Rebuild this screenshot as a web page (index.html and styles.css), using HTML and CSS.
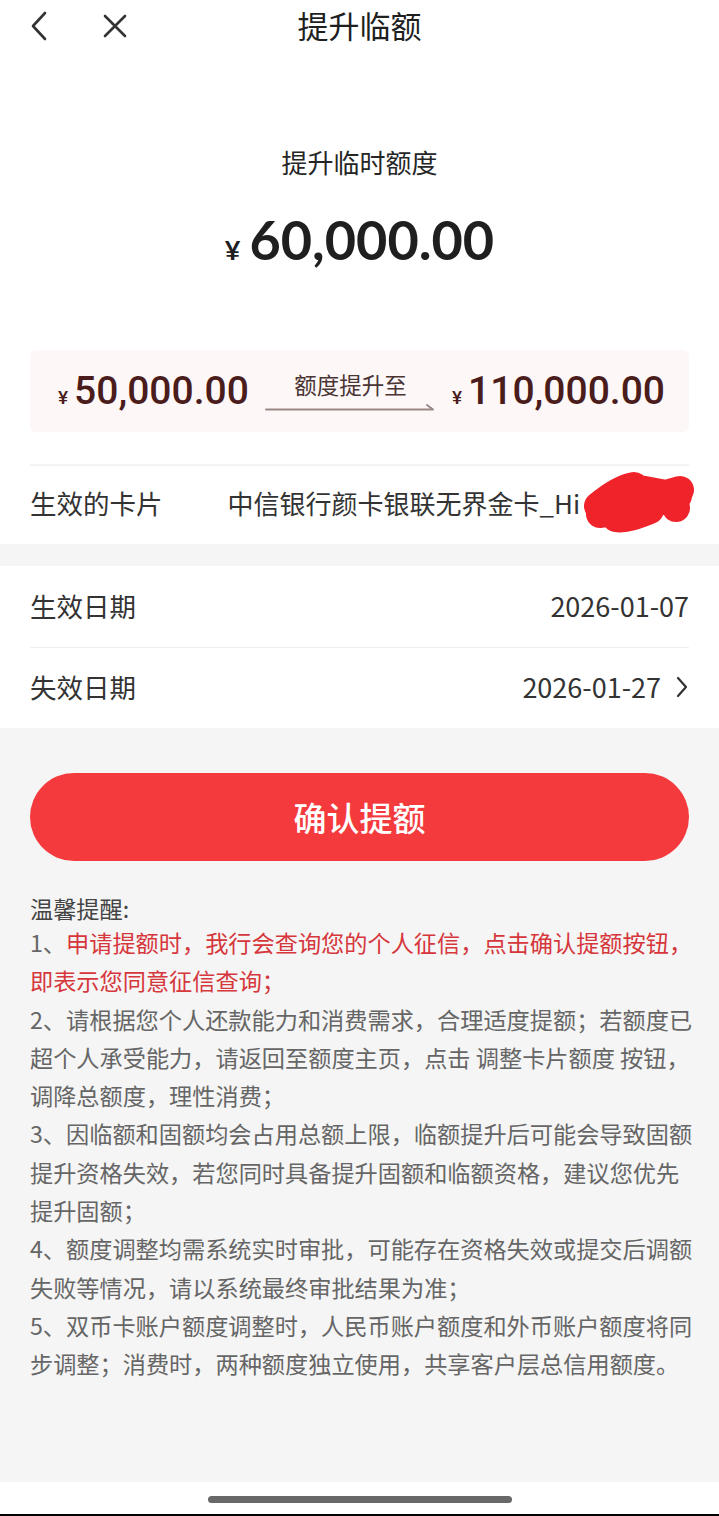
FILE: index.html
```html
<!DOCTYPE html>
<html lang="zh-CN">
<head>
<meta charset="UTF-8">
<meta name="viewport" content="width=device-width, initial-scale=1.0">
<title>提升临额</title>
<link rel="stylesheet" href="styles.css">
</head>
<body>
<div class="top">
  <div class="header">
    <div class="header-icons">
      <svg class="icon-back" width="22" height="32" viewBox="0 0 22 32"><path d="M17 3 L5 16 L17 29" fill="none" stroke="#333" stroke-width="2.6" stroke-linecap="round" stroke-linejoin="round"/></svg>
      <svg class="icon-close" width="26" height="26" viewBox="0 0 26 26"><path d="M3 3 L23 23 M23 3 L3 23" fill="none" stroke="#333" stroke-width="2.6" stroke-linecap="round"/></svg>
    </div>
    <div class="header-title">提升临额</div>
    <div></div>
  </div>

  <div class="hero">
    <div class="hero-label">提升临时额度</div>
    <div class="hero-amount"><span class="yen">¥</span>60,000.00</div>
  </div>

  <div class="compare">
    <div class="compare-amount"><span class="yen">¥</span>50,000.00</div>
    <div class="compare-mid">
      <span>额度提升至</span>
      <svg width="170" height="8" viewBox="0 0 170 8"><path d="M1 6.5 H168 L162 2" fill="none" stroke="#9b8787" stroke-width="2" stroke-linecap="round" stroke-linejoin="round"/></svg>
    </div>
    <div class="compare-amount"><span class="yen">¥</span>110,000.00</div>
  </div>

  <div class="card-row">
    <span class="row-label">生效的卡片</span>
    <span class="card-name">中信银行颜卡银联无界金卡_Hi</span>
    <svg class="scribble" width="130" height="70" viewBox="0 0 130 70"><path d="M28 38 C40 28 52 20 64 18 M30 46 C60 40 90 34 108 28 M64 20 L96 26 L110 22 M46 50 C56 52 70 46 80 42 M104 28 L106 40" fill="none" stroke="#f0232b" stroke-width="28" stroke-linecap="round" stroke-linejoin="round"/></svg>
  </div>
</div>

<div class="dates">
  <div class="date-row">
    <span class="row-label">生效日期</span>
    <span class="date-value">2026-01-07</span>
  </div>
  <div class="date-row">
    <span class="row-label">失效日期</span>
    <span class="date-value">2026-01-27
      <svg width="14" height="24" viewBox="0 0 14 24"><path d="M3 3 L11 12 L3 21" fill="none" stroke="#333" stroke-width="2.2" stroke-linecap="round" stroke-linejoin="round"/></svg>
    </span>
  </div>
</div>

<div class="bottom">
  <button class="confirm-btn">确认提额</button>

  <div class="notes">
    <div class="notes-title">温馨提醒:</div>
    <p><span>1、</span><span class="warn">申请提额时，我行会查询您的个人征信，点击确认提额按钮，即表示您同意征信查询；</span></p>
    <p>2、请根据您个人还款能力和消费需求，合理适度提额；若额度已超个人承受能力，请返回至额度主页，点击 调整卡片额度 按钮，调降总额度，理性消费；</p>
    <p>3、因临额和固额均会占用总额上限，临额提升后可能会导致固额提升资格失效，若您同时具备提升固额和临额资格，建议您优先提升固额；</p>
    <p>4、额度调整均需系统实时审批，可能存在资格失效或提交后调额失败等情况，请以系统最终审批结果为准；</p>
    <p>5、双币卡账户额度调整时，人民币账户额度和外币账户额度将同步调整；消费时，两种额度独立使用，共享客户层总信用额度。</p>
  </div>
</div>

<div class="home-bar"><div class="home-indicator"></div></div>
</body>
</html>
```

FILE: styles.css
```css
body {
  margin: 0;
  width: 719px;
  height: 1516px;
  display: flex;
  flex-direction: column;
  background-color: #f5f5f5;
  font-family: "Noto Sans CJK SC", "Noto Sans", sans-serif;
  color: #333;
}
.top {
  background-color: #fff;
}
.header {
  height: 52px;
  display: grid;
  grid-template-columns: 1fr auto 1fr;
  align-items: center;
}
.header-icons {
  display: flex;
  align-items: center;
  padding-left: 28px;
  gap: 52px;
}
.header-title {
  font-size: 31px;
  font-weight: 400;
  color: #1f1f1f;
  line-height: 52px;
  margin-top: -2px;
}
.hero {
  padding-top: 92px;
  text-align: center;
}
.hero-label {
  font-size: 26px;
  line-height: 36px;
  color: #262626;
}
.hero-amount {
  margin-top: 25px;
  font-family: Lato, "Noto Sans", sans-serif;
  font-weight: 700;
  font-size: 54px;
  line-height: 70px;
  color: #1f1f1f;
}
.hero-amount .yen {
  font-size: 27px;
  margin-right: 9px;
}
.compare {
  margin: 65px 30px 0;
  height: 82px;
  background-color: #fdf8f7;
  border-radius: 6px;
  display: flex;
  align-items: center;
  justify-content: space-between;
  padding: 0 24px 0 28px;
}
.compare-amount {
  margin-top: 6px;
  font-family: Roboto, "Noto Sans", sans-serif;
  font-weight: 500;
  font-size: 39px;
  color: #4a1c1c;
  line-height: 44px;
}
.compare-amount .yen {
  font-size: 19px;
  margin-right: 6px;
}
.compare-mid {
  display: flex;
  flex-direction: column;
  align-items: center;
  font-size: 22.5px;
  color: #4a3434;
  line-height: 26px;
}
.compare-mid svg {
  margin-top: 6px;
}
.card-row {
  position: relative;
  margin: 32px 30px 0;
  height: 80px;
  padding-bottom: 6px;
  box-sizing: border-box;
  border-top: 2px solid #f4f4f4;
  display: flex;
  align-items: center;
}
.row-label {
  font-size: 26.5px;
  color: #333;
}
.card-name {
  margin-left: 65px;
  font-size: 26px;
  color: #333;
  white-space: nowrap;
}
.scribble {
  position: absolute;
  left: 540px;
  top: 2px;
}
.dates {
  margin-top: 22px;
  background-color: #fff;
}
.date-row {
  margin: 0 30px;
  height: 81px;
  padding-bottom: 3px;
  box-sizing: border-box;
  display: flex;
  align-items: center;
  justify-content: space-between;
}
.date-row + .date-row {
  border-top: 1px solid #efefef;
}
.date-value {
  display: flex;
  align-items: center;
  gap: 14px;
  font-size: 27px;
  color: #333;
}
.bottom {
  flex: 1;
  padding: 45px 30px 0;
}
.confirm-btn {
  display: block;
  width: 100%;
  height: 88px;
  border: none;
  border-radius: 44px;
  background-color: #f53a3e;
  color: #fff;
  font-family: "Noto Sans CJK SC", sans-serif;
  font-size: 33px;
  font-weight: 500;
}
.notes {
  margin-top: 32px;
  margin-right: -9px;
  font-size: 23.2px;
  color: #666;
}
.notes-title {
  line-height: 30px;
  color: #444;
}
.notes p {
  margin: 0;
  line-height: 38.3px;
}
.warn {
  color: #d6373c;
}
.home-bar {
  height: 34px;
  background-color: #fff;
  border-bottom: 2px solid #000;
  box-sizing: border-box;
  display: flex;
  justify-content: center;
  padding-top: 14px;
}
.home-indicator {
  width: 304px;
  height: 7px;
  border-radius: 4px;
  background-color: #686868;
}
```
